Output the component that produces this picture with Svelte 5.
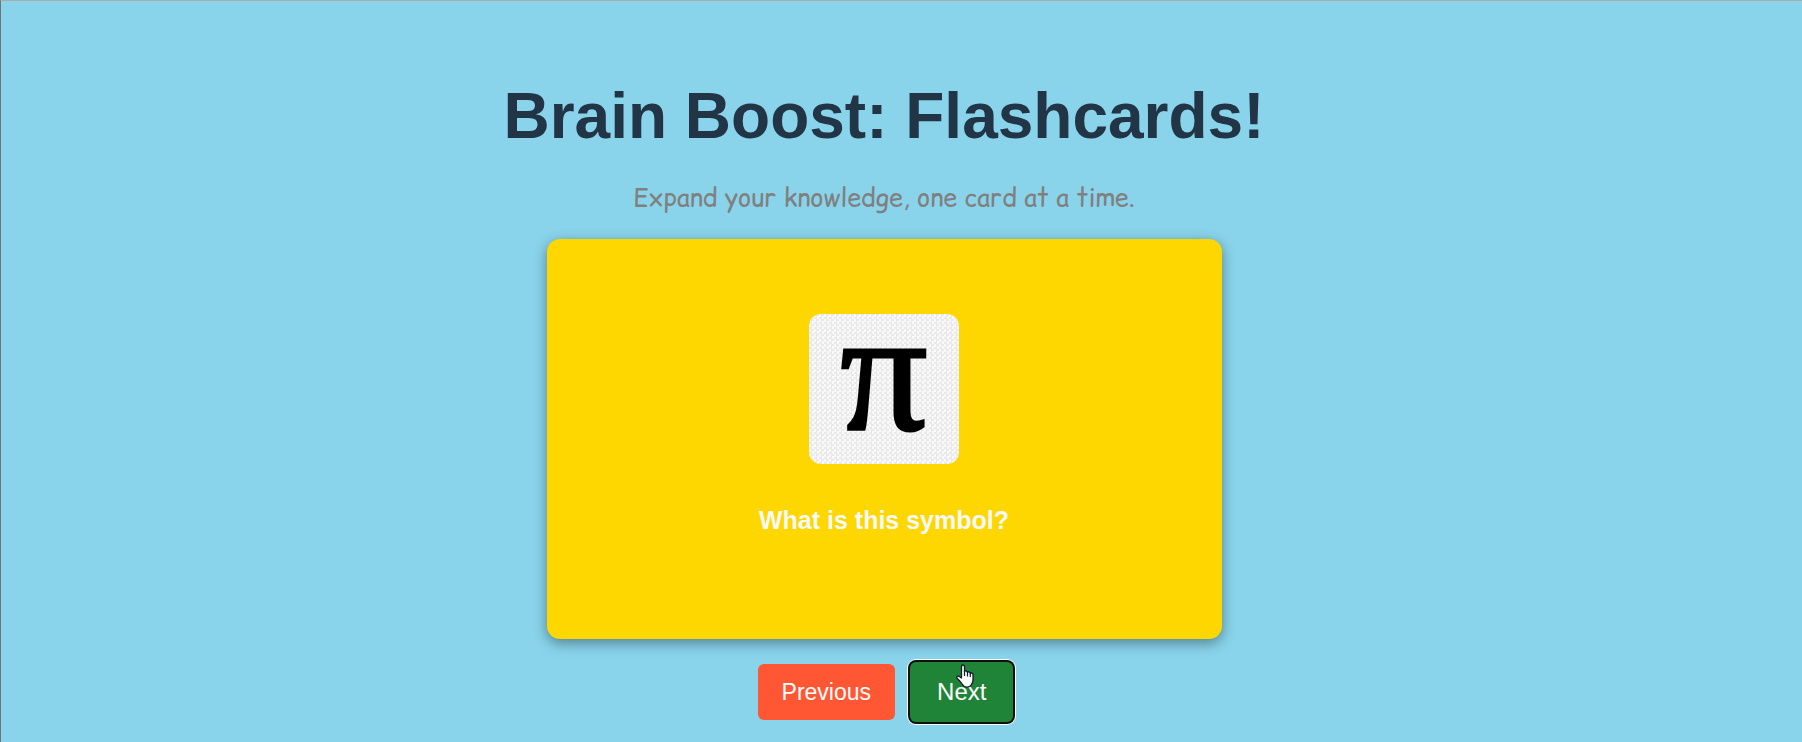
<script>
  const cards = [
    { symbol: 'π', question: 'What is this symbol?' },
    { symbol: 'Σ', question: 'What does this symbol mean?' },
    { symbol: 'Ω', question: 'Which unit uses this symbol?' }
  ];
  let index = $state(0);
  const card = $derived(cards[index]);

  function move(step) {
    index = (index + step + cards.length) % cards.length;
  }
</script>

<main>
  <h1>Brain Boost: Flashcards!</h1>
  <p class="tagline">Expand your knowledge, one card at a time.</p>

  <section class="card">
    <div class="picture">{card.symbol}</div>
    <h2>{card.question}</h2>
  </section>

  <nav>
    <button class="previous" onclick={() => move(-1)}>Previous</button>
    <button class="next" onclick={() => move(1)}>
      Next
      <svg class="pointer" viewBox="0 0 18 24" aria-hidden="true">
        <path
          d="M5.500 14V3Q5.500 1 7 1T8.500 3V7.500Q8.800 6.500 10 6.800T11.500 8.500Q12 7.500 13 7.800T14.300 9.500Q15 8.700 16 9.200T17 11V15.500Q17 18.500 15.500 20.500Q14 23.200 11 23.200T6.500 20.500Q4.500 17.500 1.300 14.500Q.3 13 1.300 12.300Q2.800 11.500 4.200 13.200Z"
          fill="#fff" stroke="#111a2c" stroke-width="1.300" stroke-linejoin="round" />
        <path d="M8.500 7V12M11.500 8.500V12.500M14.300 9.500V13" fill="none" stroke="#111a2c" stroke-width="1.200" />
      </svg>
    </button>
  </nav>
</main>

<style>
  :global(body) {
    background: #89d4eb;
    font-family: Arial, "Liberation Sans", sans-serif;
  }

  main {
    box-sizing: border-box;
    min-height: 100vh;
    padding: 78px 35px 16px 0;
    border-top: 1px solid #aaa;
    border-left: 1px solid #707478;
    display: flex;
    flex-direction: column;
    align-items: center;
  }

  h1 {
    margin: 0;
    font-size: 64px;
    line-height: 74px;
    color: #213547;
  }

  .tagline {
    margin: 26px 0 22px;
    font-family: "Comic Relief", "Comic Sans MS", "Comic Neue", Lato, sans-serif;
    font-size: 25px;
    line-height: 38px;
    color: #808080;
  }

  .card {
    box-sizing: border-box;
    width: 675px;
    max-width: 100%;
    height: 400px;
    border-radius: 13px;
    background: #ffd700;
    box-shadow: 0 4px 14px rgba(0, 0, 0, 0.4);
    display: flex;
    flex-direction: column;
    align-items: center;
    justify-content: center;
    gap: 40px;
    padding-bottom: 28px;
  }

  .picture {
    width: 150px;
    height: 150px;
    border-radius: 12px;
    background: repeating-conic-gradient(#e9e9e9 0 25%, #f9f9f9 0 50%) 0 0 / 5px 5px;
    font-family: "Liberation Serif", serif;
    font-size: 172px;
    line-height: 115px;
    text-align: center;
    color: #000;
    -webkit-text-stroke: 3px #000;
  }

  h2 {
    margin: 0;
    font-size: 25px;
    line-height: 32px;
    color: #f9f9f9;
  }

  nav {
    display: flex;
    align-items: center;
    gap: 15px;
    margin-top: 23px;
    padding-left: 3px;
  }

  button {
    position: relative;
    border: 0;
    border-radius: 6px;
    padding: 0 24px;
    font-family: inherit;
    font-size: 23px;
    line-height: 56px;
    color: #fff;
    cursor: pointer;
  }

  .previous {
    background: #ff5733;
  }

  .next {
    padding: 0 27px;
    font-size: 24px;
    line-height: 60px;
    background: #1f8437;
    box-shadow: 0 0 0 2px #101010, 0 0 0 3px #fff;
  }

  .pointer {
    position: absolute;
    left: 46px;
    top: 2px;
    width: 18px;
    height: 24px;
  }
</style>
